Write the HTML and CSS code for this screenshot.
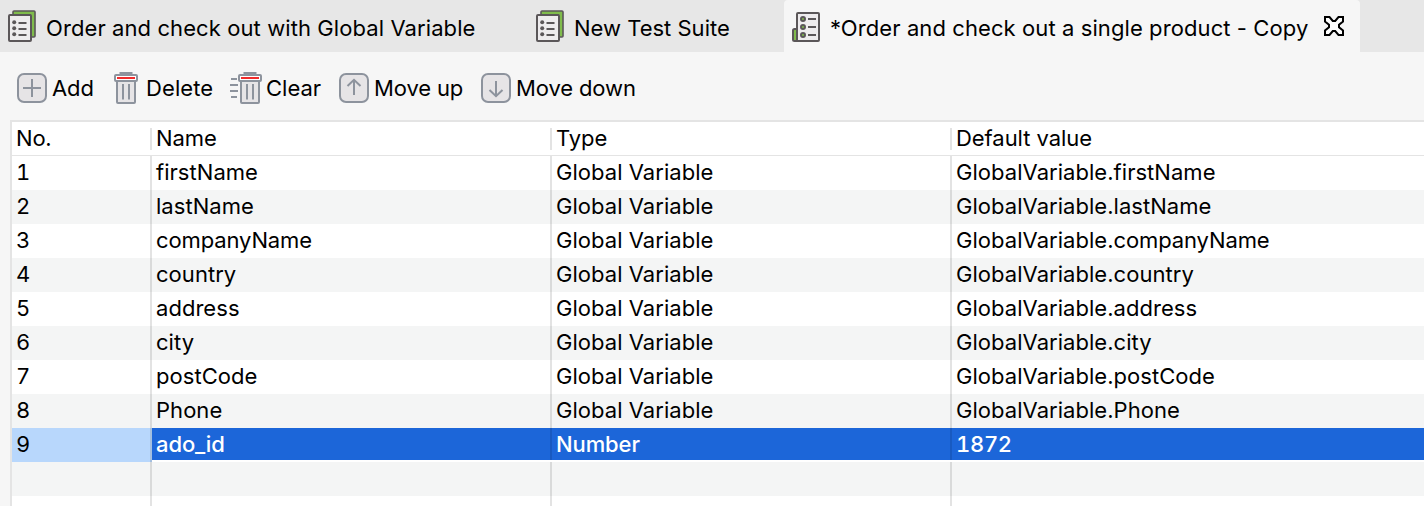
FILE: index.html
```html
<!DOCTYPE html>
<html lang="en">
<head>
<meta charset="utf-8">
<title>Test Suite Variables</title>
<link rel="stylesheet" href="styles.css">
</head>
<body>
<svg class="defs" width="0" height="0">
  <symbol id="suite" viewBox="0 0 28 32">
    <path d="M5 5V2a1 1 0 0 1 1-1H26a1 1 0 0 1 1 1V26a1 1 0 0 1-1 1H22V5Z" fill="#80bc4c" stroke="#5b5759" stroke-width="1.600"/>
    <rect x="1" y="5" width="22" height="26" rx="1" fill="#eeecee" stroke="#5b5759" stroke-width="2"/>
    <g fill="#5b5759"><circle cx="6.2" cy="12.3" r="2"/><circle cx="6.2" cy="18.3" r="2"/><circle cx="6.2" cy="24.3" r="2"/></g>
    <path d="M10.500 13h8M10.500 19h8M10.500 25h8" stroke="#5b5759" stroke-width="2"/>
  </symbol>
  <symbol id="case" viewBox="0 0 28 30">
    <path d="M5 17H2.500Q1 17 1 18.500V27.500Q1 29 2.500 29H5Z" fill="#80bc4c" stroke="#5b5759" stroke-width="2"/>
    <rect x="5" y="1" width="22" height="28" rx="1" fill="#eeecee" stroke="#5b5759" stroke-width="2"/>
    <g fill="#80bc4c" stroke="#5b5759" stroke-width="2"><circle cx="11" cy="7" r="2"/><circle cx="11" cy="15" r="2"/><circle cx="11" cy="23" r="2"/></g>
    <path d="M16 7h8M16 15h8M16 23h8" stroke="#5b5759" stroke-width="2"/>
  </symbol>
  <symbol id="bin" viewBox="0 0 24 32">
    <path d="M6.500 2.500V1h11v1.500" fill="#8d939d" stroke="#8d939d" stroke-width="2"/>
    <path d="M3 9h18V30a1 1 0 0 1-1 1H4a1 1 0 0 1-1-1Z" fill="#e6e4e6" stroke="#8d939d" stroke-width="2"/>
    <rect x="1" y="3" width="22" height="6" rx="1" fill="#fff" stroke="#8d939d" stroke-width="2"/>
    <path d="M3 6h18" stroke="#f02c2c" stroke-width="2"/>
    <path d="M9 12v15.500M15 12v15.500" stroke="#8d939d" stroke-width="2"/>
  </symbol>
</svg>
<header class="tabs">
  <div class="tab tab-one"><svg class="suite-icon"><use href="#suite"/></svg><span class="long">Order and check out with Global Variable</span></div>
  <div class="tab tab-two"><svg class="suite-icon"><use href="#suite"/></svg><span>New Test Suite</span></div>
  <div class="tab active"><svg class="case-icon"><use href="#case"/></svg><span class="current">*Order and check out a single product - Copy</span>
    <svg class="close" viewBox="0 0 20 20"><path d="M1 1H5.500L8.800 5H11.200L14.500 1H19V5.500L15 8.800V11.200L19 14.500V19H14.500L11.200 15H8.800L5.500 19H1V14.500L5 11.200V8.800L1 5.500Z" fill="#fff" stroke="#000" stroke-width="2"/></svg>
  </div>
</header>
<nav class="toolbar">
  <div class="tool add"><svg class="box" viewBox="0 0 30 30"><rect x="1" y="1" width="28" height="28" rx="6" fill="#e6e4e6" stroke="#8d939d" stroke-width="2"/><path d="M6 15h18M15 6v18" stroke="#8d939d" stroke-width="2"/></svg><span>Add</span></div>
  <div class="tool delete"><svg class="bin"><use href="#bin"/></svg><span>Delete</span></div>
  <div class="tool clear"><svg class="lines" viewBox="0 0 8 32"><path d="M1 7h6M0 13h8M0 19h8M1 25h6" stroke="#8d939d" stroke-width="2"/></svg><svg class="bin"><use href="#bin"/></svg><span>Clear</span></div>
  <div class="tool up"><svg class="box" viewBox="0 0 30 30"><rect x="1" y="1" width="28" height="28" rx="6" fill="#e6e4e6" stroke="#8d939d" stroke-width="2"/><path d="M15 22V7M8.500 13L15 6.800L21.500 13" fill="none" stroke="#8d939d" stroke-width="2"/></svg><span>Move up</span></div>
  <div class="tool down"><svg class="box" viewBox="0 0 30 30"><rect x="1" y="1" width="28" height="28" rx="6" fill="#e6e4e6" stroke="#8d939d" stroke-width="2"/><path d="M15 8v15M8.500 17L15 23.200L21.500 17" fill="none" stroke="#8d939d" stroke-width="2"/></svg><span>Move down</span></div>
</nav>
<main class="table">
  <div class="row head"><div>No.</div><div>Name</div><div>Type</div><div>Default value</div></div>
  <div class="row"><div>1</div><div>firstName</div><div>Global Variable</div><div>GlobalVariable.firstName</div></div>
  <div class="row even"><div>2</div><div>lastName</div><div>Global Variable</div><div>GlobalVariable.lastName</div></div>
  <div class="row"><div>3</div><div class="company">companyName</div><div>Global Variable</div><div>GlobalVariable.<span class="company">companyName</span></div></div>
  <div class="row even"><div>4</div><div>country</div><div>Global Variable</div><div>GlobalVariable.country</div></div>
  <div class="row"><div>5</div><div>address</div><div>Global Variable</div><div>GlobalVariable.address</div></div>
  <div class="row even"><div>6</div><div>city</div><div>Global Variable</div><div>GlobalVariable.city</div></div>
  <div class="row"><div>7</div><div>postCode</div><div>Global Variable</div><div>GlobalVariable.postCode</div></div>
  <div class="row even"><div>8</div><div>Phone</div><div>Global Variable</div><div>GlobalVariable.Phone</div></div>
  <div class="row selected"><div>9</div><div>ado_id</div><div>Number</div><div>1872</div></div>
  <div class="row even"><div></div><div></div><div></div><div></div></div>
  <div class="row"><div></div><div></div><div></div><div></div></div>
</main>
</body>
</html>
```
FILE: styles.css
```css
* { box-sizing: border-box; }
body {
  margin: 0;
  height: 506px;
  overflow: hidden;
  background: #f6f6f6;
  color: #000;
  font: 22px/32px Inter, sans-serif;
  white-space: nowrap;
}
svg { flex: none; display: block; }
.defs { position: absolute; }
.tabs { display: flex; height: 52px; background: #e7e7e7; }
.tab { display: flex; align-items: flex-start; height: 52px; padding-top: 10px; }
.tab span { line-height: 36px; }
.tab-one { width: 528px; padding-left: 8px; }
.tab-two { width: 256px; padding-left: 8px; }
.suite-icon { width: 28px; height: 32px; margin-right: 10px; }
.case-icon { width: 28px; height: 30px; margin: 2px 10px 0 0; }
.active { width: 576px; padding-left: 8px; background: #f6f6f6; border-radius: 4px 4px 0 0; }
.long { letter-spacing: .09px; }
.current { width: 494px; letter-spacing: .09px; }
.close { width: 20px; height: 20px; margin-top: 6px; }
.toolbar { display: flex; height: 68px; padding: 20px 0 0 17px; }
.tool { display: flex; align-items: center; height: 32px; }
.tool span { line-height: 32px; }
.box { width: 30px; height: 30px; margin-right: 5px; }
.bin { width: 24px; height: 32px; }
.lines { width: 8px; height: 32px; }
.add { width: 97px; }
.add span, .up span, .down span { letter-spacing: -.12px; }
.delete { width: 116px; }
.delete span { letter-spacing: .1px; }
.delete .bin { margin-right: 8px; }
.clear { width: 109px; }
.clear .bin { margin-right: 4px; }
.up { width: 142px; }
.table { margin-left: 10px; border-top: 2px solid #e4e4e4; border-left: 2px solid #e4e4e4; background: #fff; }
.row { display: grid; grid-template-columns: 140px 400px 400px 1fr; height: 34px; letter-spacing: .04px; }
.row > div { height: 34px; padding-left: 4px; border-right: 2px solid rgba(0, 0, 0, .11); }
.row > div:first-child { font-variant-numeric: tabular-nums; }
.row > div:last-child { border-right: 0; }
.row .company { letter-spacing: -.12px; }
.head { border-bottom: 1px solid #e4e4e4; letter-spacing: -.05px; }
.head > div { height: 22px; margin-top: 6px; line-height: 20px; }
.head > div:first-child { font-variant-numeric: normal; letter-spacing: -.2px; }
.even { background: #f4f5f5; }
.selected > div { height: 32px; background: #1c66d9; color: #fff; font-weight: 500; letter-spacing: -.1px; }
.selected > div:last-child { font-variant-numeric: tabular-nums; letter-spacing: -.3px; }
.selected > div:first-child { height: 34px; background: #b8d7fc; color: #000; font-weight: 400; }
```
